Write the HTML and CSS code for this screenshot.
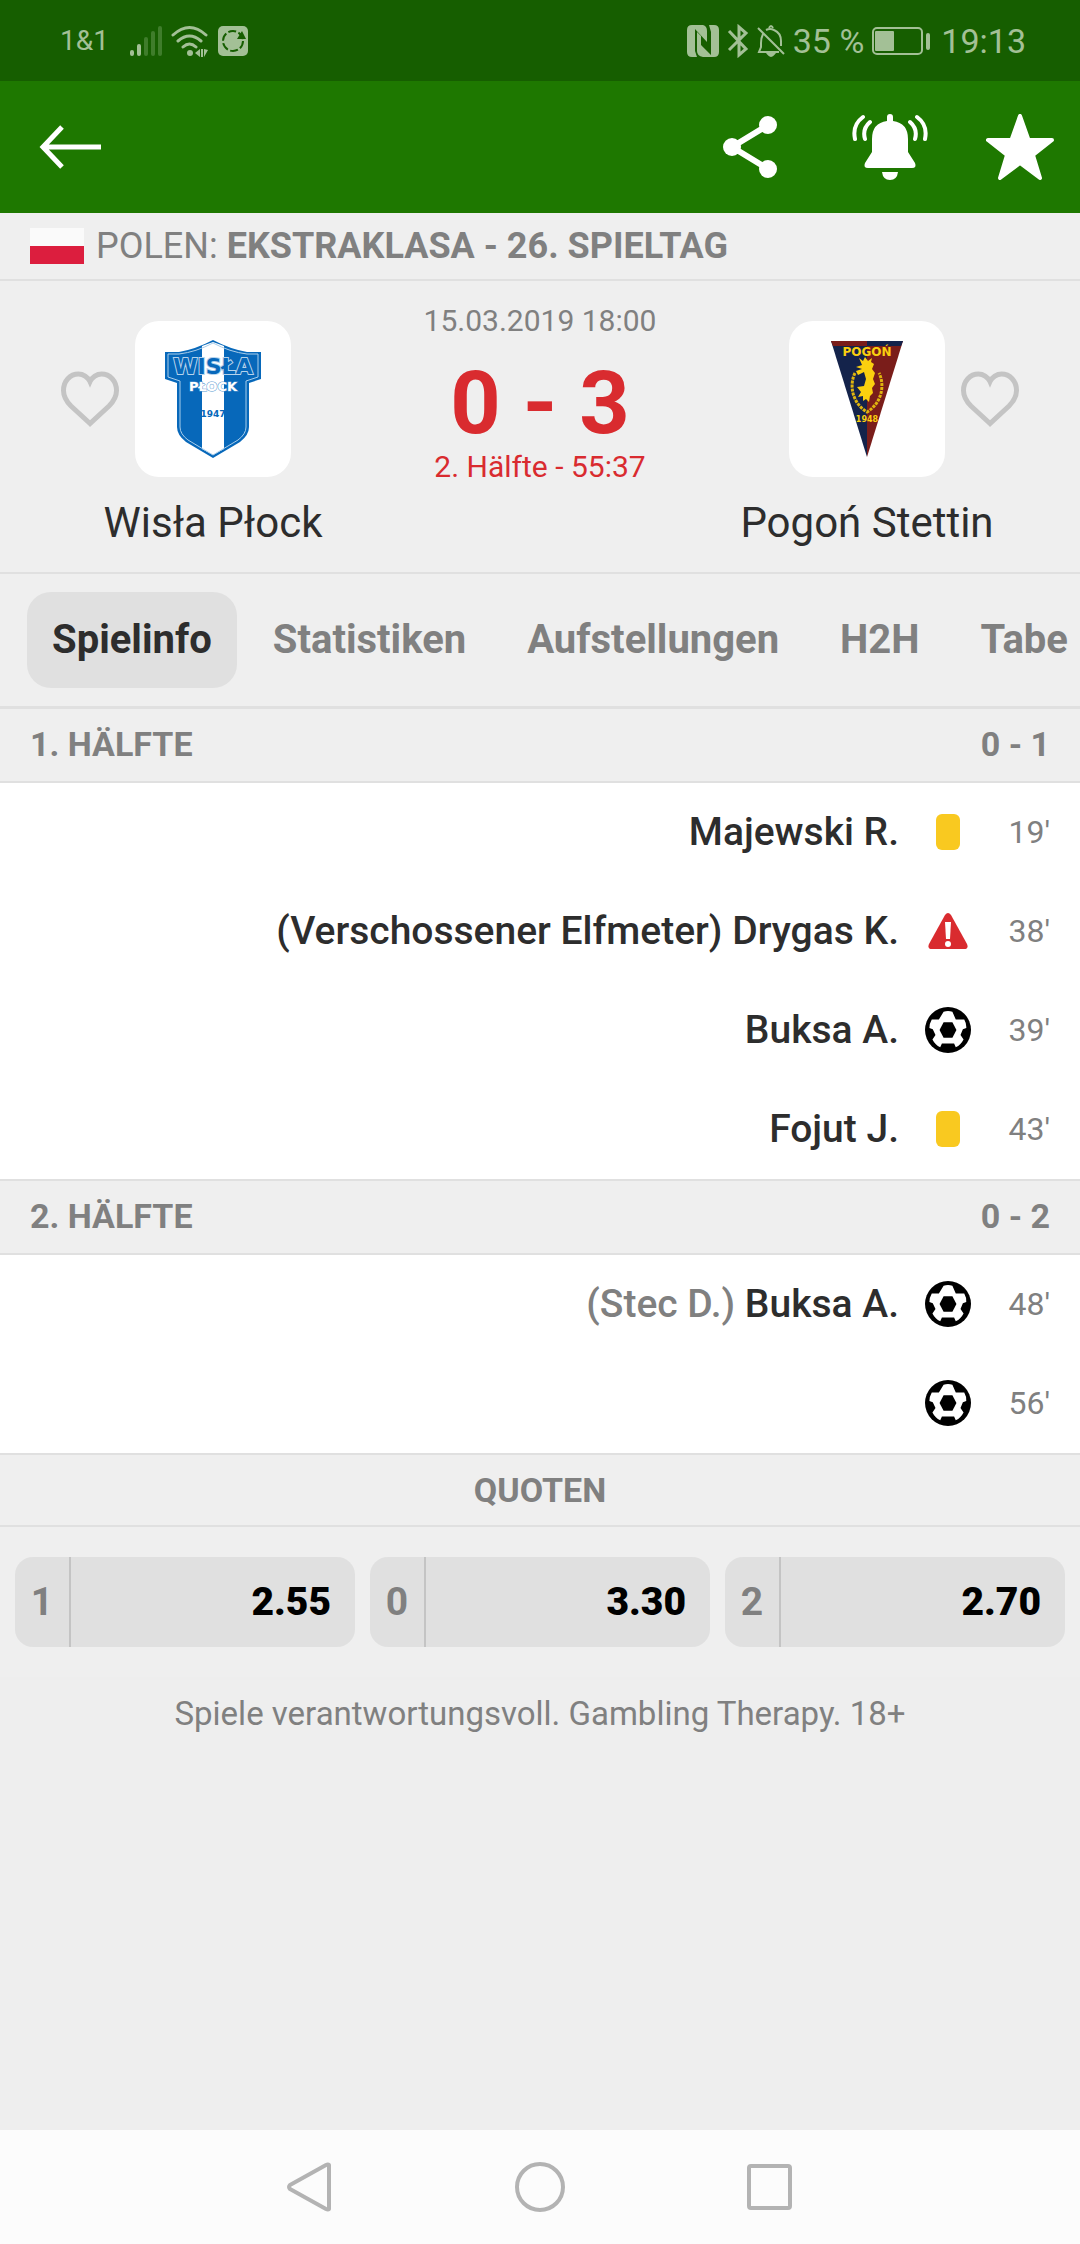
FILE: index.html
```html
<!DOCTYPE html>
<html lang="de">

<head>
    <meta charset="utf-8">
    <meta name="viewport" content="width=device-width, initial-scale=1">
    <title>Wisła Płock - Pogoń Stettin</title>
    <link rel="stylesheet" href="styles.css">
</head>

<body>
    <!-- Shared icons -->
    <svg class="sprite" aria-hidden="true">
        <symbol id="ball" viewBox="0 0 136 136">
            <circle cx="68" cy="68" r="68" fill="#000" />
            <path fill="#fff" d="M55 14Q68 10 81 14L91 37H116Q123 49 122 62L112 66L105 83L114 96Q106 112 91 119L86 108H50L45 119Q30 112 22 96L31 83L23 66L13 62Q13 49 20 37H41Z" />
            <path fill="#000" d="M55 45H81L93 68L81 91H55L43 68Z" />
        </symbol>
        <symbol id="heart" viewBox="0 0 58 56">
            <path d="M29 52.500L10 35C5 30 2.500 26 2.500 19.500C2.500 10 9 3 17.500 3C22 3 27 6 29 10.500C31 6 36 3 40.500 3C49 3 55.500 10 55.500 19.500C55.500 26 53 30 48 35Z" fill="none" stroke="#c4c4c4" stroke-width="5" />
        </symbol>
    </svg>

    <div class="status-bar">
        <div class="status-group status-left">
            <span class="carrier">1&amp;1</span>
            <svg width="34" height="32" viewBox="0 0 34 32" fill="#a3c096">
                <rect x="1" y="25" width="4" height="6" rx="2" />
                <rect x="8" y="19" width="4" height="12" rx="2" />
                <g fill="#3f7d2b">
                    <rect x="15" y="12" width="4" height="19" rx="2" />
                    <rect x="22" y="6" width="4" height="25" rx="2" />
                    <rect x="29" y="1" width="4" height="30" rx="2" />
                </g>
            </svg>
            <svg width="38" height="32" viewBox="0 0 38 32" fill="none" stroke="#a3c096" stroke-width="3" stroke-linecap="round">
                <path d="M2 10Q18.500-5 35 10M7 16Q18.500 6 30 16M12 22Q18.500 16 25 22" />
                <circle cx="19" cy="28" r="3" fill="#a3c096" stroke="none" />
                <path fill="#a3c096" stroke="none" d="M24 28L29 24V32ZM30 24H32V32H30ZM33 24L37 25L33 32Z" />
            </svg>
            <svg width="32" height="32" viewBox="0 0 32 32">
                <rect x="1" y="1" width="30" height="30" rx="5" fill="#a3c096" />
                <circle cx="16" cy="16" r="10" fill="none" stroke="#165e00" stroke-width="2" stroke-dasharray="8 2.500" />
                <path d="M25 6L29 14H20Z" fill="#165e00" />
            </svg>
        </div>
        <div class="status-group status-right">
            <svg width="32" height="34" viewBox="0 0 32 34" fill="#a3c096">
                <path d="M5 1H8V27L10 33H5Q0 33 0 28V6Q0 1 5 1Z" />
                <path d="M8 1H16Q20 2 20 7V18L8 5ZM24 33H16Q10 32 10 27V8L14 12V21L24 31Z" />
                <path d="M22 1H27Q32 1 32 6V28Q32 33 27 33H24V8Z" />
            </svg>
            <svg width="22" height="34" viewBox="0 0 22 34" fill="none" stroke="#a3c096" stroke-width="3">
                <path d="M2 7L19 25L12 31V3L19 9L2 26" />
            </svg>
            <svg width="28" height="34" viewBox="0 0 28 34" fill="none" stroke="#a3c096" stroke-width="2">
                <path d="M1 4L27 30M6 10Q4 14 4 19V23L2 28H22M9 6Q13 4 17 6Q24 9 24 17V22" />
                <path d="M12 4Q14 0 16 4" />
                <path d="M11 30H17Q14 34 11 30Z" fill="#a3c096" />
            </svg>
            <span class="battery-level">35 %</span>
            <svg class="battery" width="58" height="28" viewBox="0 0 58 28">
                <rect x="1" y="1" width="49" height="26" rx="4" fill="none" stroke="#a3c096" stroke-width="2" />
                <rect x="3" y="4" width="19" height="20" rx="1" fill="#a3c096" />
                <rect x="54" y="6" width="4" height="17" rx="2" fill="#a3c096" />
            </svg>
            <span class="clock">19:13</span>
        </div>
    </div>

    <header class="app-bar">
        <button class="icon-btn" type="button" aria-label="Zurück">
            <svg width="64" height="44" viewBox="0 0 64 44" fill="none" stroke="#fff" stroke-width="5">
                <path d="M23 2L4 22L23 42M4 22H62" />
            </svg>
        </button>
        <div class="app-actions">
            <button class="icon-btn" type="button" aria-label="Teilen">
                <svg width="56" height="62" viewBox="0 0 56 62" fill="#fff">
                    <path d="M46 9L10 31L46 53" fill="none" stroke="#fff" stroke-width="6" />
                    <circle cx="10" cy="31" r="9" />
                    <circle cx="46" cy="9" r="9" />
                    <circle cx="46" cy="53" r="9" />
                </svg>
            </button>
            <button class="icon-btn" type="button" aria-label="Benachrichtigungen">
                <svg width="76" height="66" viewBox="0 0 76 66" fill="#fff">
                    <path d="M35 3Q35 0 38 0Q41 0 41 3V7Q56 9 56 25V38L63 49Q65 54 60 54H16Q11 54 13 49L20 38V25Q20 9 35 7Z" />
                    <path d="M30 58H46Q45 66 38 66Q31 66 30 58Z" />
                    <path d="M11 3Q0 11 3 25M18 8Q10 15 13 25M65 3Q76 11 73 25M58 8Q66 15 63 25" fill="none" stroke="#fff" stroke-width="4" stroke-linecap="round" />
                </svg>
            </button>
            <button class="icon-btn" type="button" aria-label="Favorit">
                <svg width="68" height="66" viewBox="0 0 68 66" fill="#fff" stroke="#fff" stroke-width="4" stroke-linejoin="round">
                    <path d="M34 2L42.500 26H66L47 41L54 64L34 49L14 64L21 41L2 26H25.500Z" />
                </svg>
            </button>
        </div>
    </header>

    <main>
        <div class="league">
            <svg width="54" height="36" viewBox="0 0 54 36">
                <rect width="54" height="18" fill="#fafafa" />
                <rect y="18" width="54" height="18" fill="#dc1e3e" />
            </svg>
            <span>POLEN: <b>EKSTRAKLASA - 26. SPIELTAG</b></span>
        </div>

        <section class="match">
            <div class="team">
                <button class="icon-btn fav" type="button" aria-label="Wisła Płock merken">
                    <svg width="58" height="56"><use href="#heart" /></svg>
                </button>
                <div class="crest">
                    <svg width="96" height="118" viewBox="0 0 96 118">
                        <path fill="#0768ba" d="M48 0Q65 9 82 12H96V39L84 43V87Q84 95 75 102L48 118L21 102Q12 95 12 87V43L0 39V12H14Q31 9 48 0Z" />
                        <path fill="#fff" d="M37 6L48 2L59 6V109L48 115L37 109Z" />
                        <path fill="none" stroke="#a9cdea" d="M48 3Q65 12 82 14H93V37L81 41V87Q81 94 73 100L48 115L23 100Q15 94 15 87V41L3 37V14H14Q31 12 48 3Z" />
                        <text class="wisla" x="48" y="34">WISŁA</text>
                        <text class="plock" x="48" y="51">PŁOCK</text>
                        <text class="year-blue" x="48" y="77">1947</text>
                    </svg>
                </div>
                <h2>Wisła Płock</h2>
            </div>

            <div class="result">
                <p class="kickoff">15.03.2019 18:00</p>
                <p class="score">0 - 3</p>
                <p class="period">2. Hälfte - 55:37</p>
            </div>

            <div class="team away">
                <div class="crest">
                    <svg width="72" height="116" viewBox="0 0 72 116">
                        <path fill="#14234b" d="M0 0H36V116Z" />
                        <path fill="#7a1d1a" d="M72 0H36V116Z" />
                        <path fill="#7a1d1a" d="M0 0H36V5H2Z" />
                        <path fill="#14234b" d="M36 0H72L70 5H36Z" />
                        <path fill="none" stroke="#dfb50e" stroke-width="3" stroke-dasharray="3 1" d="M24 32C18 44 21 62 36 71C51 62 54 44 48 32" />
                        <path fill="#fbd00f" d="M28 17L32 20L34 16L37 20L41 17L40 21L43 23L41 28L44 32L42 38L44 43L41 47L42 52L39 55L38 61L35 58L32 60V55L27 56L30 51L26 46L33 45L35 38L33 31L27 34L25 30L31 28L25 26L31 24Z" />
                        <text class="pogon" x="36" y="15">POGOŃ</text>
                        <text class="year-gold" x="36" y="81">1948</text>
                    </svg>
                </div>
                <button class="icon-btn fav" type="button" aria-label="Pogoń Stettin merken">
                    <svg width="58" height="56"><use href="#heart" /></svg>
                </button>
                <h2>Pogoń Stettin</h2>
            </div>
        </section>

        <nav class="tabs">
            <a class="tab active" href="#spielinfo">Spielinfo</a>
            <a class="tab" href="#statistiken">Statistiken</a>
            <a class="tab" href="#aufstellungen">Aufstellungen</a>
            <a class="tab" href="#h2h">H2H</a>
            <a class="tab" href="#tabelle">Tabe</a>
        </nav>

        <section id="spielinfo">
            <h3 class="half"><span>1. HÄLFTE</span><span>0 - 1</span></h3>
            <ul class="events">
                <li>
                    <span class="player">Majewski R.</span>
                    <span class="event-icon"><span class="yellow-card"></span></span>
                    <span class="minute">19'</span>
                </li>
                <li>
                    <span class="player">(Verschossener Elfmeter) Drygas K.</span>
                    <span class="event-icon">
                        <svg width="40" height="36" viewBox="0 0 40 36">
                            <path fill="#d92b2f" d="M17 2Q20-2 23 2L39 31Q41 36 36 36H4Q-1 36 1 31Z" />
                            <path fill="#fff" d="M17 9H23L22 26H18Z" />
                            <circle cx="20" cy="31" r="3" fill="#fff" />
                        </svg>
                    </span>
                    <span class="minute">38'</span>
                </li>
                <li>
                    <span class="player">Buksa A.</span>
                    <span class="event-icon"><svg width="46" height="46"><use href="#ball" /></svg></span>
                    <span class="minute">39'</span>
                </li>
                <li>
                    <span class="player">Fojut J.</span>
                    <span class="event-icon"><span class="yellow-card"></span></span>
                    <span class="minute">43'</span>
                </li>
            </ul>

            <h3 class="half second"><span>2. HÄLFTE</span><span>0 - 2</span></h3>
            <ul class="events">
                <li>
                    <span class="player"><span class="assist">(Stec D.)</span> Buksa A.</span>
                    <span class="event-icon"><svg width="46" height="46"><use href="#ball" /></svg></span>
                    <span class="minute">48'</span>
                </li>
                <li>
                    <span class="player"></span>
                    <span class="event-icon"><svg width="46" height="46"><use href="#ball" /></svg></span>
                    <span class="minute">56'</span>
                </li>
            </ul>
        </section>

        <section class="quotes">
            <h3>QUOTEN</h3>
            <div class="odds">
                <button class="odd" type="button"><span>1</span><b>2.55</b></button>
                <button class="odd" type="button"><span>0</span><b>3.30</b></button>
                <button class="odd" type="button"><span>2</span><b>2.70</b></button>
            </div>
        </section>

        <p class="disclaimer">Spiele verantwortungsvoll. Gambling Therapy. 18+</p>
    </main>

    <footer class="nav-bar">
        <button class="icon-btn" type="button" aria-label="Zurück">
            <svg width="50" height="50" viewBox="0 0 50 50" fill="none" stroke="#b3b3b3" stroke-width="4" stroke-linejoin="round">
                <path d="M44 3V47Q43 48 41 47L5 27Q3 25 5 23L41 3Q43 2 44 3Z" />
            </svg>
        </button>
        <button class="icon-btn" type="button" aria-label="Startseite">
            <svg width="50" height="50" viewBox="0 0 50 50" fill="none" stroke="#b3b3b3" stroke-width="4">
                <circle cx="25" cy="25" r="23" />
            </svg>
        </button>
        <button class="icon-btn" type="button" aria-label="Übersicht">
            <svg width="50" height="50" viewBox="0 0 50 50" fill="none" stroke="#b3b3b3" stroke-width="4">
                <rect x="4" y="4" width="41" height="42" rx="2" />
            </svg>
        </button>
    </footer>
</body>

</html>
```
FILE: styles.css
```css
* {
    box-sizing: border-box;
}

body {
    margin: 0;
    min-height: 100vh;
    display: flex;
    flex-direction: column;
    background-color: #eee;
    color: #2d2d2d;
    font-family: Roboto, "Liberation Sans", sans-serif;
    font-size: 34px;
    line-height: 40px;
}

h2,
h3,
p,
ul {
    margin: 0;
    padding: 0;
}

svg {
    display: block;
    flex: none;
}

.sprite {
    position: absolute;
    width: 0;
    height: 0;
}

.icon-btn {
    padding: 0;
    border: 0;
    background: none;
    cursor: pointer;
}

/* Status bar */
.status-bar {
    height: 81px;
    padding: 0 54px 0 60px;
    display: flex;
    justify-content: space-between;
    align-items: center;
    background-color: #165e00;
    color: #a3c096;
}

.status-group {
    display: flex;
    align-items: center;
    gap: 8px;
}

.carrier {
    margin-right: 12px;
    font-size: 28px;
}

.battery-level {
    white-space: nowrap;
}

.clock {
    margin-left: 3px;
}

/* App bar */
.app-bar {
    height: 132px;
    padding: 0 26px 0 39px;
    display: flex;
    justify-content: space-between;
    align-items: center;
    background-color: #1e7800;
}

.app-actions {
    display: flex;
    align-items: center;
    gap: 58px;
}

.app-actions .icon-btn:first-child {
    margin-right: 16px;
}

main {
    flex: 1;
}

.league {
    display: flex;
    align-items: center;
    gap: 12px;
    padding: 13px 30px;
    background-color: #efefef;
    border-bottom: 2px solid #e0e0e0;
    color: #808080;
    font-size: 36px;
}

/* Teams and score */
.match {
    display: flex;
    justify-content: space-between;
    padding: 0 61px 25px;
    background-color: #efefef;
    border-bottom: 2px solid #e0e0e0;
}

.team {
    display: grid;
    grid-template-columns: 58px 156px 58px;
    align-items: center;
    gap: 22px 16px;
    padding-top: 40px;
}

.away .crest {
    grid-column: 2;
}

.crest {
    height: 156px;
    display: flex;
    justify-content: center;
    align-items: center;
    background-color: #fff;
    border-radius: 24px;
}

.team h2 {
    grid-column: 1 / -1;
    grid-row: 2;
    font-size: 42px;
    font-weight: 400;
    line-height: 48px;
    text-align: center;
    white-space: nowrap;
}

.crest text {
    font-family: "DejaVu Sans", sans-serif;
    font-weight: 700;
    text-anchor: middle;
}

.wisla {
    font-size: 22px;
    fill: #0768ba;
    stroke: #b5d3ec;
    stroke-width: 2px;
    paint-order: stroke;
}

.plock {
    font-size: 13px;
    fill: #fff;
    stroke: #5b9bd2;
    stroke-width: 1px;
    paint-order: stroke;
}

.year-blue {
    font-size: 9px;
    fill: #0768ba;
}

.pogon {
    font-size: 12px;
    fill: #fbd00f;
}

.year-gold {
    font-size: 8px;
    fill: #fbd00f;
}

.result {
    padding-top: 20px;
    text-align: center;
    font-size: 30px;
}

.kickoff {
    color: #808080;
}

.score {
    font-size: 88px;
    font-weight: 700;
    line-height: 88px;
    padding-top: 18px;
}

.score,
.period {
    color: #d92b2f;
}

/* Tabs */
.tabs {
    display: flex;
    gap: 11px;
    padding: 18px 15px 18px 27px;
    overflow: hidden;
    background-color: #efefef;
    border-bottom: 3px solid #e0e0e0;
}

.tab {
    padding: 26px 25px;
    border-radius: 24px;
    color: #808080;
    font-size: 40px;
    font-weight: 700;
    line-height: 44px;
    text-decoration: none;
}

.tab.active {
    background-color: #e0e0e0;
    color: #2d2d2d;
}

/* Match events */
.half {
    display: flex;
    justify-content: space-between;
    padding: 15px 30px 17px;
    background-color: #efefef;
    border-bottom: 2px solid #e0e0e0;
    color: #808080;
    font-size: 34px;
    font-weight: 700;
}

.half.second {
    border-top: 2px solid #e0e0e0;
}

.events {
    list-style: none;
    background-color: #fff;
}

.events li {
    display: flex;
    align-items: center;
    height: 99px;
    padding: 0 30px 2px 0;
}

.player {
    flex: 1;
    font-size: 39px;
    font-weight: 500;
    text-align: right;
}

.assist {
    color: #808080;
}

.event-icon {
    width: 46px;
    margin-left: 26px;
    display: flex;
    justify-content: center;
}

.yellow-card {
    width: 24px;
    height: 36px;
    border-radius: 6px;
    background-color: #f9c920;
}

.minute {
    width: 79px;
    color: #808080;
    font-size: 32px;
    text-align: right;
}

/* Odds */
.quotes {
    background-color: #efefef;
    border-top: 2px solid #e0e0e0;
}

.quotes h3 {
    padding: 15px 0;
    border-bottom: 2px solid #e0e0e0;
    color: #808080;
    font-size: 34px;
    text-align: center;
}

.odds {
    display: grid;
    grid-template-columns: repeat(3, 1fr);
    gap: 15px;
    padding: 30px 15px;
}

.odd {
    height: 90px;
    display: flex;
    align-items: center;
    padding: 0 24px 0 0;
    border: 0;
    border-radius: 18px;
    background-color: #e0e0e0;
    color: #000;
    font-family: inherit;
    font-size: 39px;
    font-weight: 700;
    line-height: 90px;
    cursor: pointer;
}

.odd span {
    width: 56px;
    border-right: 2px solid #c4c4c4;
    color: #808080;
}

.odd b {
    flex: 1;
    text-align: right;
}

.disclaimer {
    padding: 17px 30px;
    color: #808080;
    font-size: 33px;
    text-align: center;
}

/* System navigation */
.nav-bar {
    height: 114px;
    display: flex;
    justify-content: center;
    align-items: center;
    gap: 180px;
    background-color: #fcfcfc;
}
```
